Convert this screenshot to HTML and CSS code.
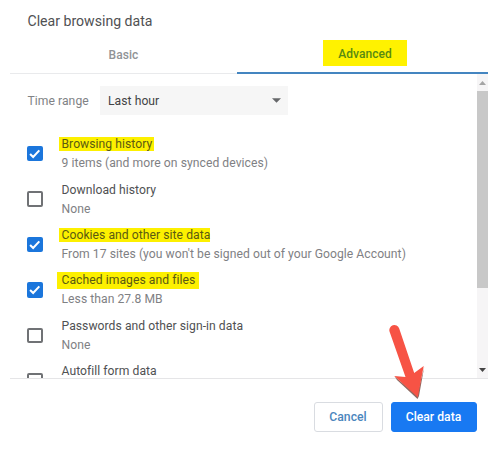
FILE: index.html
```html
<!DOCTYPE html>
<html lang="en">
<head>
<meta charset="utf-8">
<title>Clear browsing data</title>
<link rel="stylesheet" href="styles.css">
</head>
<body>
<main class="dialog">
  <h1 class="title">Clear browsing data</h1>
  <nav class="tabs">
    <div class="tab">Basic</div>
    <div class="tab active"><span class="tab-mark">Advanced</span></div>
  </nav>
  <section class="body">
    <div class="content">
      <div class="range">
        <span class="range-label">Time range</span>
        <div class="select"><span>Last hour</span><svg class="caret" viewBox="0 0 10 5"><path d="M0 0h10L5 5z"/></svg></div>
      </div>
      <div class="row">
        <span class="box checked"><svg viewBox="0 0 15 15"><path d="M3 7.7l3 3 6-6.4"/></svg></span>
        <div class="text"><div class="label"><mark>Browsing history</mark></div><div class="sub">9 items (and more on synced devices)</div></div>
      </div>
      <div class="row">
        <span class="box"></span>
        <div class="text"><div class="label">Download history</div><div class="sub">None</div></div>
      </div>
      <div class="row">
        <span class="box checked"><svg viewBox="0 0 15 15"><path d="M3 7.7l3 3 6-6.4"/></svg></span>
        <div class="text"><div class="label"><mark class="tight">Cookies and other site data</mark></div><div class="sub">From 17 sites (you won't be signed out of your Google Account)</div></div>
      </div>
      <div class="row">
        <span class="box checked"><svg viewBox="0 0 15 15"><path d="M3 7.7l3 3 6-6.4"/></svg></span>
        <div class="text"><div class="label"><mark class="wide">Cached images and files</mark></div><div class="sub">Less than 27.8 MB</div></div>
      </div>
      <div class="row">
        <span class="box"></span>
        <div class="text"><div class="label">Passwords and other sign-in data</div><div class="sub">None</div></div>
      </div>
      <div class="row">
        <span class="box"></span>
        <div class="text"><div class="label">Autofill form data</div><div class="sub"></div></div>
      </div>
    </div>
    <div class="scrollbar">
      <svg class="up" viewBox="0 0 7 4"><path d="M0 4h7L3.5 0z"/></svg>
      <div class="thumb"></div>
      <svg class="down" viewBox="0 0 7 4"><path d="M0 0h7L3.5 4z"/></svg>
    </div>
  </section>
  <footer class="actions">
    <button class="btn">Cancel</button>
    <button class="btn primary">Clear data</button>
  </footer>
  <svg class="arrow" viewBox="0 0 50 80"><path class="shadow" d="M17.5 51.5L20 55L40.5 74L42 71L47.2 42L40 70z"/><path class="shape" d="M12.6 6.8A5 5 0 0 1 22.2 3.5L37.2 48L46.7 41L40.8 72.3L17.3 51L28.5 52z"/></svg>
</main>
</body>
</html>
```
FILE: styles.css
```css
* { box-sizing: border-box; }
body {
  margin: 0;
  background: #fff;
  font: 12.15px/18px Roboto, sans-serif;
  letter-spacing: 0.05px;
  color: #505153;
}
.dialog {
  position: relative;
  width: 478px;
  height: 453px;
  margin-left: 10px;
  display: flex;
  flex-direction: column;
}
.title {
  margin: 0;
  padding: 11px 0 0 17.5px;
  height: 36px;
  font-size: 14.1px;
  line-height: 20px;
  font-weight: 400;
  letter-spacing: 0;
}
.tabs {
  display: flex;
  height: 38px;
  font-size: 12px;
  font-weight: 500;
}
.tab {
  flex: 0 0 227px;
  padding-top: 9.5px;
  border-bottom: 1px solid #e9eaec;
  text-align: center;
  color: #909396;
}
.tab.active {
  flex: 1;
  padding-top: 4px;
  border-bottom: 2px solid #4485c0;
}
.tab-mark {
  display: block;
  width: 84px;
  height: 26px;
  margin: 0 0 0 86px;
  background: #fff200;
  color: #588a12;
  line-height: 29px;
}
.body {
  display: flex;
  height: 305px;
  overflow: hidden;
  border-bottom: 1px solid #e5e5e7;
}
.content { flex: 1; }
.range {
  display: flex;
  align-items: center;
  margin: 12px 0 16px 17.5px;
  height: 29px;
}
.range-label { width: 72.5px; color: #808285; }
.select {
  display: flex;
  justify-content: space-between;
  align-items: center;
  width: 188px;
  height: 29px;
  padding: 0 7px 0 8px;
  background: #f6f6f6;
  color: #424345;
}
.caret { width: 9px; height: 5px; fill: #66686a; }
.row {
  display: flex;
  align-items: center;
  height: 45.4px;
  padding-left: 17.3px;
}
.box {
  width: 15.4px;
  height: 15.4px;
  margin-right: 18.8px;
  border: 2px solid #707275;
  border-radius: 2px;
}
.box.checked { border: 0; background: #1b76dc; }
.box svg { display: block; fill: none; stroke: #fff; stroke-width: 2; }
.label { height: 19px; }
.sub { height: 18px; color: #7f8184; }
mark {
  display: inline-block;
  height: 14px;
  margin-left: -2px;
  padding: 0 2px;
  line-height: 14px;
  background: #fdf000;
  color: #5b5a12;
}
.tight { padding-right: 0; }
.wide { height: 17px; line-height: 17px; margin-left: -4px; padding: 0 4px; }
.scrollbar {
  display: flex;
  flex-direction: column;
  align-items: center;
  width: 11px;
  background: #f6f5f6;
}
.up { width: 7px; height: 4px; margin: 7px 0 5.5px; fill: #a5a5a5; }
.thumb { width: 11px; height: 197px; background: #c8c8c8; }
.down { width: 7px; height: 4px; margin-top: auto; margin-bottom: 6px; fill: #444; }
.actions {
  display: flex;
  justify-content: flex-end;
  gap: 8px;
  padding: 23px 11.5px 0 0;
}
.btn {
  width: 69px;
  height: 30px;
  padding: 0;
  border: 1px solid #d9dce1;
  border-radius: 3px;
  background: #fff;
  color: #4b86bd;
  font: 500 12.2px Roboto, sans-serif;
}
.btn.primary { width: 86px; border-color: #1879f2; background: #1879f2; color: #fff; }
.arrow {
  position: absolute;
  left: 367px;
  top: 325px;
  width: 50px;
  height: 80px;
}
.shape { fill: #f75345; }
.shadow { fill: #8f6a62; }
```
